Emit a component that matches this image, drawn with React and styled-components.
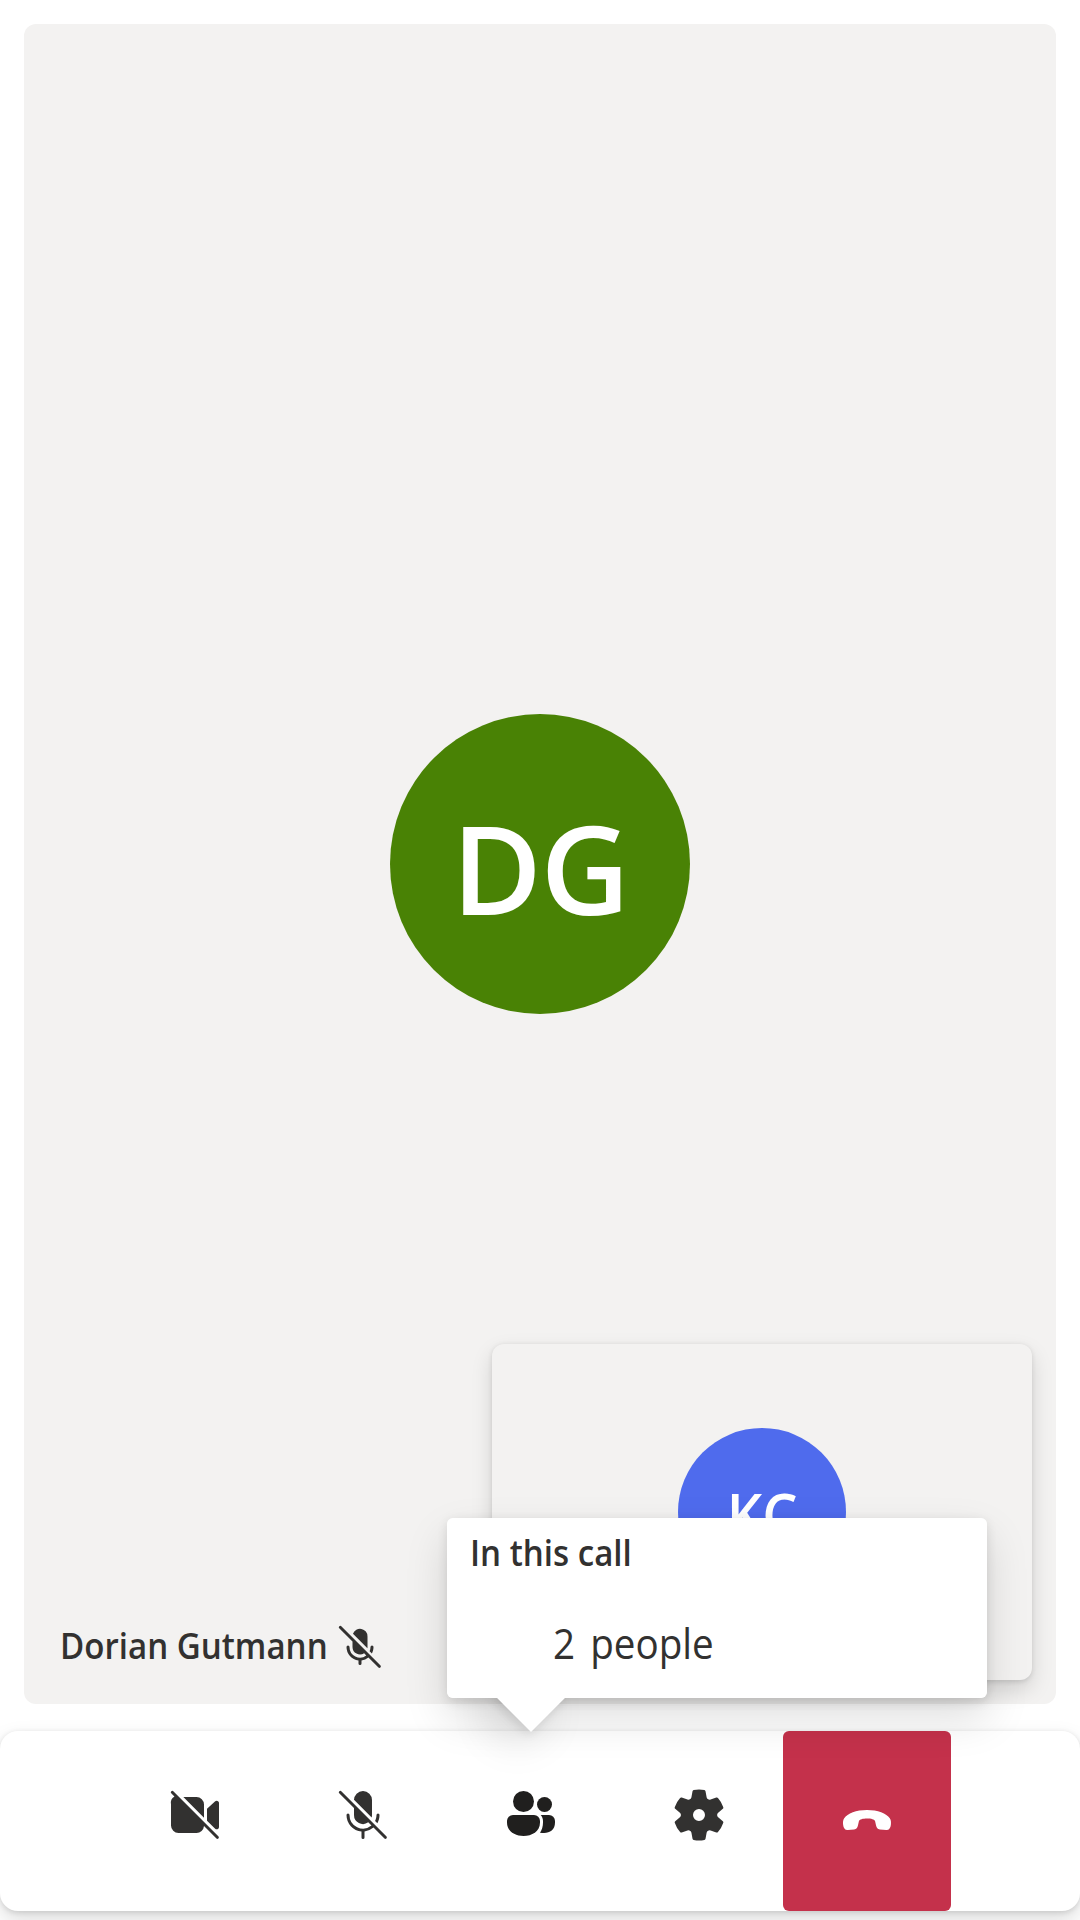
import React from "react";
import styled, { createGlobalStyle } from "styled-components";

const GlobalStyle = createGlobalStyle`
  html, body { margin: 0; padding: 0; background: #ffffff; }
  *, *::before, *::after { box-sizing: border-box; }
`;

const Screen = styled.main`
  position: relative;
  display: flex;
  flex-direction: column;
  gap: 27px;
  width: 1080px;
  height: 1920px;
  padding-top: 24px;
  overflow: hidden;
  background: #ffffff;
  color: #323130;
  font-family: "Open Sans", "Noto Sans", sans-serif;
`;

const Stage = styled.section`
  position: relative;
  display: flex;
  align-items: center;
  justify-content: center;
  height: 1680px;
  margin: 0 24px;
  border-radius: 12px;
  background: #f3f2f1;
`;

const Avatar = styled.div`
  display: flex;
  align-items: center;
  justify-content: center;
  width: ${(p) => p.$size}px;
  height: ${(p) => p.$size}px;
  padding-top: ${(p) => p.$drop}px;
  border-radius: 50%;
  background: ${(p) => p.$color};
  color: #ffffff;
  font-size: ${(p) => p.$font}px;
  font-weight: 600;
  line-height: 1;
  letter-spacing: ${(p) => p.$track || 0}px;
`;

const Initials = styled.span`
  display: block;
  transform: scaleX(${(p) => p.$condense || 1});
`;

const Condensed = styled.span`
  display: inline-block;
  transform: scaleX(0.919);
  transform-origin: 0 50%;
  white-space: nowrap;
`;

const NameTag = styled.div`
  position: absolute;
  left: 36px;
  bottom: 33px;
  display: flex;
  align-items: center;
  gap: 10px;
  height: 48px;
`;

const Name = styled.div`
  width: 266px;
  font-size: 36px;
  font-weight: 600;
  line-height: 46px;
  height: 48px;
`;

const LocalPreview = styled.div`
  position: absolute;
  right: 24px;
  bottom: 24px;
  display: flex;
  align-items: center;
  justify-content: center;
  width: 540px;
  height: 336px;
  border-radius: 12px;
  background: #f3f2f1;
  box-shadow: 0 9.6px 21.6px rgba(0, 0, 0, 0.132), 0 1.8px 5.4px rgba(0, 0, 0, 0.108);
`;

const ControlBar = styled.nav`
  display: flex;
  height: 180px;
  padding-left: 111px;
  border-radius: 18px;
  background: #ffffff;
  box-shadow: 0 9.6px 21.6px rgba(0, 0, 0, 0.132), 0 1.8px 5.4px rgba(0, 0, 0, 0.108);
`;

const ControlButton = styled.button`
  display: flex;
  align-items: center;
  justify-content: center;
  width: 168px;
  height: 180px;
  padding: 0 0 12px;
  border: 0;
  border-radius: 6px;
  background: ${(p) => (p.$danger ? "#c4314b" : "transparent")};
  color: ${(p) => (p.$danger ? "#ffffff" : p.$active ? "#201f1e" : "#323130")};
`;

const Glyph = styled.svg`
  display: block;
  flex: none;
  width: ${(p) => p.$size}px;
  height: ${(p) => p.$size}px;
  fill: currentColor;
`;

const Callout = styled.div`
  position: absolute;
  left: 447px;
  top: 1518px;
  width: 540px;
  height: 180px;
  border-radius: 6px;
  box-shadow: 0 19.2px 43.2px rgba(0, 0, 0, 0.132), 0 3.6px 10.8px rgba(0, 0, 0, 0.108);
`;

const Beak = styled.div`
  position: absolute;
  left: 60px;
  bottom: -24px;
  width: 48px;
  height: 48px;
  background: #ffffff;
  box-shadow: inherit;
  transform: rotate(45deg);
`;

const CalloutBody = styled.div`
  position: relative;
  display: flex;
  flex-direction: column;
  height: 100%;
  border-radius: 6px;
  background: #ffffff;
`;

const CalloutTitle = styled.div`
  height: 72px;
  padding-left: 22.5px;
  font-size: 36px;
  font-weight: 600;
  line-height: 70px;
`;

const CalloutItem = styled.div`
  height: 108px;
  padding-left: 106px;
  font-size: 42px;
  line-height: 106px;
  word-spacing: 5.5px;
`;

const VideoOffIcon = () => (
  <Glyph $size={60} viewBox="0 0 20 20">
    <path d="M2.85 2.15a.5.5 0 1 0-.7.7l1.01 1.02A2.5 2.5 0 0 0 2 6.5v7A2.5 2.5 0 0 0 4.5 16h6a2.5 2.5 0 0 0 2.5-2.3l4.15 4.15a.5.5 0 0 0 .7-.7l-15-15ZM13 10.88 6.12 4h4.38A2.5 2.5 0 0 1 13 6.5v4.38ZM14 11.88l2.72 2.72c.5.42 1.28.07 1.28-.6V6c0-.66-.77-1-1.26-.58L14 7.93v3.95Z" />
  </Glyph>
);

const MicOffIcon = () => (
  <Glyph $size={60} viewBox="0 0 20 20">
    <path d="M2.85 2.15a.5.5 0 1 0-.7.7L7 7.7V10a3 3 0 0 0 4.75 2.45L12.83 13.53A4.5 4.5 0 0 1 5.5 10a.5.5 0 0 0-1 0 5.5 5.5 0 0 0 5 5.48v2.02a.5.5 0 0 0 1 0v-2.02A5.48 5.48 0 0 0 13.5 14.2L17.15 17.85a.5.5 0 0 0 .7-.7l-15-15ZM7 4.88V5a3 3 0 1 1 6 0v5c0 .28-.04.55-.11.8L7 4.88ZM14.03 11.99l.77.73c.45-.81.7-1.74.7-2.72a.5.5 0 0 0-1 0c0 .71-.17 1.4-.47 1.99Z" />
  </Glyph>
);

const MicOffSmallIcon = () => (
  <Glyph $size={48} viewBox="0 0 16 16">
    <path d="M1.85 1.15a.5.5 0 1 0-.7.7L5.5 6.2V8a2.5 2.5 0 0 0 3.88 2.08L10.1 10.8A3.5 3.5 0 0 1 4.5 8a.5.5 0 0 0-1 0 4.5 4.5 0 0 0 4 4.47v1.03a.5.5 0 0 0 1 0v-1.03A4.5 4.5 0 0 0 10.81 11.51L14.15 14.85a.5.5 0 0 0 .7-.7l-13-13ZM5.66 3.56A2.5 2.5 0 0 1 10.5 4.5V8c0 .13 0 .26-.03.38L5.66 3.56ZM11.2 9.4l.77.77c.33-.65.53-1.4.53-2.17a.5.5 0 0 0-1 0c0 .5-.1.98-.3 1.4Z" />
  </Glyph>
);

const PeopleIcon = () => (
  <Glyph $size={60} viewBox="0 0 20 20">
    <circle cx="7.5" cy="5.5" r="3.5" />
    <circle cx="14.5" cy="6.5" r="2.5" />
    <path d="M4 10a2 2 0 0 0-2 2v.5C2 15.5 4.7 17 7.5 17s5.5-1.5 5.5-4.5V12a2 2 0 0 0-2-2H4ZM13.24 10c.47.53.76 1.23.76 2v.5c0 1.3-.34 2.44-1 3.38.4.08.9.12 1.4.12 1.9 0 3.6-1.1 3.6-3.5V12a2 2 0 0 0-2-2h-2.76Z" />
  </Glyph>
);

const SettingsIcon = () => (
  <Glyph $size={60} viewBox="0 0 20 20">
    <path
      fillRule="evenodd"
      d="M1.91 7.38A8.5 8.5 0 0 1 3.7 4.3a.5.5 0 0 1 .54-.13l1.92.68a1 1 0 0 0 1.32-.76l.36-2a.5.5 0 0 1 .4-.4 8.53 8.53 0 0 1 3.55 0c.2.04.35.2.38.4l.37 2a1 1 0 0 0 1.32.76l1.92-.68a.5.5 0 0 1 .54.13 8.5 8.5 0 0 1 1.78 3.08c.06.2 0 .4-.15.54l-1.56 1.32a1 1 0 0 0 0 1.52l1.56 1.32a.5.5 0 0 1 .15.54 8.5 8.5 0 0 1-1.78 3.08.5.5 0 0 1-.54.13l-1.92-.68a1 1 0 0 0-1.32.76l-.37 2a.5.5 0 0 1-.38.4 8.53 8.53 0 0 1-3.56 0 .5.5 0 0 1-.39-.4l-.36-2a1 1 0 0 0-1.32-.76l-1.92.68a.5.5 0 0 1-.54-.13 8.5 8.5 0 0 1-1.78-3.08.5.5 0 0 1 .15-.54l1.56-1.32a1 1 0 0 0 0-1.52L2.06 7.92a.5.5 0 0 1-.15-.54ZM8 10a2 2 0 1 0 4 0 2 2 0 0 0-4 0Z"
    />
  </Glyph>
);

const HangUpIcon = () => (
  <Glyph $size={60} viewBox="0 0 20 20">
    <path d="M10 8.33C13.6 8.33 16.5 9.5 17.6 11.1C18.05 11.75 18.05 12.5 17.95 13.3C17.82 14.3 17.4 15.05 16.4 14.99L14.3 14.8C13.5 14.7 13.2 14.3 13.02 13.5L12.7 12.1C12.5 11.4 11.4 11.15 10 11.15C8.6 11.15 7.5 11.4 7.3 12.1L6.98 13.5C6.8 14.3 6.5 14.7 5.7 14.8L3.6 14.99C2.6 15.05 2.18 14.3 2.05 13.3C1.95 12.5 1.95 11.75 2.4 11.1C3.5 9.5 6.4 8.33 10 8.33Z" />
  </Glyph>
);

export default function App() {
  return (
    <>
      <GlobalStyle />
      <Screen>
        <Stage>
          <Avatar $size={300} $color="#498205" $font={123} $drop={7} $track={-1.5}>
            <Initials>DG</Initials>
          </Avatar>
          <NameTag>
            <Name>
              <Condensed>Dorian Gutmann</Condensed>
            </Name>
            <MicOffSmallIcon />
          </NameTag>
          <LocalPreview>
            <Avatar $size={168} $color="#4f6bed" $font={60} $drop={3}>
              <Initials $condense={0.93}>KC</Initials>
            </Avatar>
          </LocalPreview>
        </Stage>
        <ControlBar>
          <ControlButton aria-label="Turn on camera">
            <VideoOffIcon />
          </ControlButton>
          <ControlButton aria-label="Unmute">
            <MicOffIcon />
          </ControlButton>
          <ControlButton $active aria-label="People">
            <PeopleIcon />
          </ControlButton>
          <ControlButton aria-label="Settings">
            <SettingsIcon />
          </ControlButton>
          <ControlButton $danger aria-label="Leave">
            <HangUpIcon />
          </ControlButton>
        </ControlBar>
        <Callout>
          <Beak />
          <CalloutBody>
            <CalloutTitle>
              <Condensed>In this call</Condensed>
            </CalloutTitle>
            <CalloutItem>
              <Condensed>2 people</Condensed>
            </CalloutItem>
          </CalloutBody>
        </Callout>
      </Screen>
    </>
  );
}
